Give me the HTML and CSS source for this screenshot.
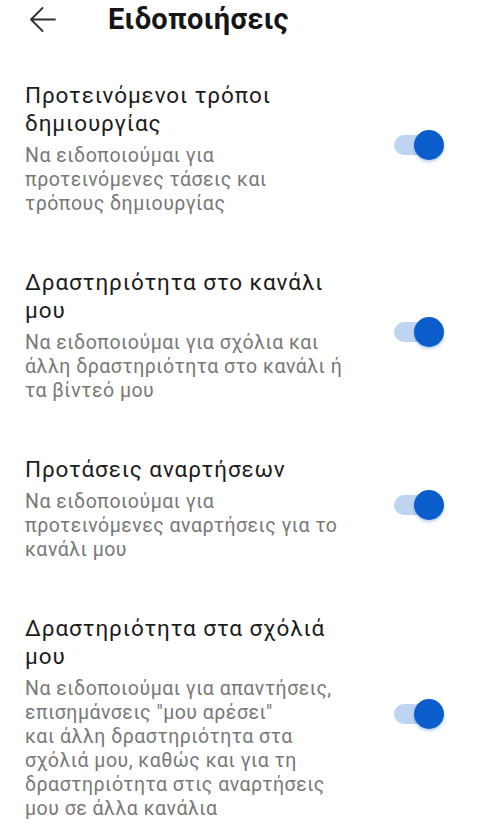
FILE: index.html
```html
<!DOCTYPE html>
<html lang="el">
<head>
	<meta charset="UTF-8">
	<title>Ειδοποιήσεις</title>
	<link rel="stylesheet" href="styles.css">
</head>
<body>
	<div class="header">
		<svg class="back" width="28" height="26" viewBox="0 0 28 26">
			<path d="M27 12.5 H3 M14.5 1 L3 12.5 L14.5 24" fill="none" stroke="#303030" stroke-width="1.8" stroke-linecap="round" stroke-linejoin="round"/>
		</svg>
		<h1 class="title">Ειδοποιήσεις</h1>
	</div>

	<div class="list">
		<div class="item">
			<div class="text">
				<div class="name">Προτεινόμενοι τρόποι<br>δημιουργίας</div>
				<div class="desc">Να ειδοποιούμαι για<br>προτεινόμενες τάσεις και<br>τρόπους δημιουργίας</div>
			</div>
			<div class="switch"><span class="knob"></span></div>
		</div>

		<div class="item">
			<div class="text">
				<div class="name">Δραστηριότητα στο κανάλι<br>μου</div>
				<div class="desc">Να ειδοποιούμαι για σχόλια και<br>άλλη δραστηριότητα στο κανάλι ή<br>τα βίντεό μου</div>
			</div>
			<div class="switch"><span class="knob"></span></div>
		</div>

		<div class="item">
			<div class="text">
				<div class="name">Προτάσεις αναρτήσεων</div>
				<div class="desc">Να ειδοποιούμαι για<br>προτεινόμενες αναρτήσεις για το<br>κανάλι μου</div>
			</div>
			<div class="switch"><span class="knob"></span></div>
		</div>

		<div class="item">
			<div class="text">
				<div class="name">Δραστηριότητα στα σχόλιά<br>μου</div>
				<div class="desc">Να ειδοποιούμαι για απαντήσεις,<br>επισημάνσεις "μου αρέσει"<br>και άλλη δραστηριότητα στα<br>σχόλιά μου, καθώς και για τη<br>δραστηριότητα στις αναρτήσεις<br>μου σε άλλα κανάλια</div>
			</div>
			<div class="switch"><span class="knob"></span></div>
		</div>
	</div>
</body>
</html>
```

FILE: styles.css
```css
body {
	margin: 0;
	background-color: #fff;
	font-family: Roboto, "Noto Sans", sans-serif;
	color: #1c1c1c;
}
.header {
	display: flex;
	align-items: flex-start;
	height: 55px;
	padding: 2px 0 0 28px;
	box-sizing: border-box;
}
.back {
	margin-top: 5px;
	flex: none;
}
.title {
	margin: 0 0 0 52px;
	font-size: 29px;
	line-height: 34px;
	font-weight: 700;
	letter-spacing: 0.3px;
	color: #161616;
}
.item {
	display: flex;
	align-items: center;
	padding: 26px 36px 26px 25px;
}
.text {
	flex: 1;
}
.name {
	font-size: 22.5px;
	line-height: 28px;
	letter-spacing: 0.9px;
	color: #1c1c1c;
}
.desc {
	margin-top: 7px;
	font-size: 19.5px;
	line-height: 24px;
	letter-spacing: 0.5px;
	color: #787878;
}
.switch {
	position: relative;
	flex: none;
	width: 46px;
	height: 20px;
	margin: 0 4px 8px 0;
	border-radius: 10px;
	background-color: #bfd4f1;
}
.knob {
	position: absolute;
	right: -4px;
	top: -5px;
	width: 30px;
	height: 30px;
	border-radius: 50%;
	background-color: #0b5dcc;
	box-shadow: 0 2px 3px rgba(11, 93, 204, 0.3);
}
```
